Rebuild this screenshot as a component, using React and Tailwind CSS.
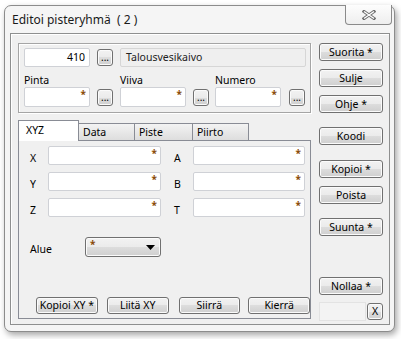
import React from "react";

const SKIN =
  "rounded-[3px] border border-[#707070] bg-[linear-gradient(#f2f2f2,#ebebeb_50%,#dddddd_50%,#cfcfcf)] shadow-[inset_0_0_0_1px_#fbfbfb] text-black text-[10.5px] leading-none";
const BTN = `flex items-center justify-center ${SKIN}`;

function Btn({ children, className = "" }) {
  return <div className={`${BTN} ${className}`}>{children}</div>;
}

function Field({ className = "", star = true, value = "" }) {
  return (
    <div
      className={`relative flex items-center justify-end rounded-[2px] border border-[#cfd1d6] bg-white pr-[4px] text-[10.5px] leading-none text-black ${className}`}
    >
      {value}
      {star && (
        <span className="absolute right-[3px] top-[1px] text-[10px] font-bold text-[#8a4a05]">*</span>
      )}
    </div>
  );
}

function Dots({ className = "" }) {
  return (
    <div className={`flex justify-center items-end ${SKIN} h-[17px] w-[16px] pb-[3px] text-[10px] ${className}`}>...</div>
  );
}

function Tab({ children, active, className = "" }) {
  if (active)
    return (
      <div
        className={`relative z-10 flex h-[21px] items-center border border-b-0 border-[#898c95] bg-white pl-[7px] text-[10.5px] ${className}`}
      >
        {children}
      </div>
    );
  return (
    <div
      className={`mt-[3px] flex h-[18px] items-center border border-l-0 border-b-0 border-[#898c95] bg-[linear-gradient(#f3f3f3,#dcdcdc)] pl-[4px] text-[10.5px] ${className}`}
    >
      {children}
    </div>
  );
}

export default function App() {
  return (
    <div className="min-h-screen bg-white pl-[4px] pt-[5px] font-['Noto_Sans',sans-serif] text-black">
      <div className="flex h-[327px] w-[391px] flex-col rounded-[7px] border border-[#8c8c8c] bg-[#f5f5f5] shadow-[2px_3px_6px_rgba(0,0,0,0.35)]">
        {/* title bar */}
        <div className="flex h-[27px] items-start justify-between">
          <div className="pl-[7px] pt-[8px] text-[12px] leading-none text-[#1a1a1a]">
            Editoi pisteryhmä&nbsp;&nbsp;( 2 )
          </div>
          <div className="mr-[2px] -mt-[1px] flex h-[20px] w-[47px] items-center justify-center rounded-b-[4px] border border-t-0 border-[#8a8a8a] bg-[linear-gradient(#fdfdfd,#eeeeee)]">
            <svg width="14" height="10" viewBox="0 0 14 10">
              <path d="M2 1.5 L12 8.5 M12 1.5 L2 8.5" stroke="#6e6e6e" strokeWidth="3.2" strokeLinecap="square" fill="none" />
              <path d="M2 1.5 L12 8.5 M12 1.5 L2 8.5" stroke="#ffffff" strokeWidth="1.4" strokeLinecap="butt" fill="none" />
            </svg>
          </div>
        </div>

        {/* client area */}
        <div className="mb-[6px] ml-[5px] mr-[4px] flex flex-1 border border-[#8e8f8f] bg-[#f0f0f0] pl-[7px] pt-[9px] shadow-[inset_1px_1px_0_#ffffff]">
          {/* left column */}
          <div className="flex w-[293px] flex-col">
            {/* group box */}
            <div className="h-[70px] border border-[#a5a5a5] pl-[5px] pt-[4px] shadow-[inset_1px_1px_0_#ffffff,1px_1px_0_#ffffff]">
              <div className="flex items-center">
                <Field className="h-[19px] w-[66px]" star={false} value="410" />
                <Dots className="ml-[7px]" />
                <div className="ml-[7px] flex h-[19px] w-[186px] items-center rounded-[2px] border border-[#d6d6d6] bg-[#efefef] pl-[5px] text-[10.5px] leading-none text-[#222]">
                  Talousvesikaivo
                </div>
              </div>
              <div className="mt-[7px] flex">
                <div className="flex w-[96px] flex-col">
                  <div className="h-[13px] text-[10.5px] leading-[13px]">Pinta</div>
                  <div className="flex items-center">
                    <Field className="h-[20px] w-[66px]" />
                    <Dots className="ml-[7px]" />
                  </div>
                </div>
                <div className="flex w-[95px] flex-col">
                  <div className="h-[13px] text-[10.5px] leading-[13px]">Viiva</div>
                  <div className="flex items-center">
                    <Field className="h-[20px] w-[66px]" />
                    <Dots className="ml-[7px]" />
                  </div>
                </div>
                <div className="flex flex-col">
                  <div className="h-[13px] text-[10.5px] leading-[13px]">Numero</div>
                  <div className="flex items-center">
                    <Field className="h-[20px] w-[66px]" />
                    <Dots className="ml-[8px]" />
                  </div>
                </div>
              </div>
            </div>

            {/* tabs */}
            <div className="mt-[7px] flex">
              <Tab active className="w-[61px]">XYZ</Tab>
              <Tab className="w-[56px]">Data</Tab>
              <Tab className="w-[58px]">Piste</Tab>
              <Tab className="w-[56px]">Piirto</Tab>
            </div>
            <div className="-mt-[1px] flex h-[179px] flex-col border border-[#898c95] bg-[#f0f0f0] pl-[11px] pt-[5px]">
              <div className="flex flex-col gap-[7px]">
                {[
                  ["X", "A"],
                  ["Y", "B"],
                  ["Z", "T"],
                ].map(([l, r]) => (
                  <div key={l} className="flex items-center">
                    <div className="w-[18px] pt-[5px] text-[10.5px] leading-none">{l}</div>
                    <Field className="h-[19px] w-[113px]" />
                    <div className="ml-[13px] w-[19px] pt-[5px] text-[10.5px] leading-none">{r}</div>
                    <Field className="h-[19px] w-[112px]" />
                  </div>
                ))}
              </div>
              <div className="mt-[20px] flex items-center">
                <div className="w-[55px] pt-[5px] text-[10.5px] leading-none">Alue</div>
                <div className={`flex items-center justify-between ${SKIN} h-[20px] w-[76px] pl-[4px] pr-[4px]`}>
                  <span className="-mt-[6px] text-[10px] font-bold text-[#8a4a05]">*</span>
                  <svg width="9" height="5" viewBox="0 0 9 5" className="mr-[1px] mt-[1px]">
                    <path d="M0 0 H9 L4.5 5 Z" fill="#000" />
                  </svg>
                </div>
              </div>
              <div className="mt-auto mb-[4px] ml-[6px] flex">
                <Btn className="h-[17px] w-[63px]">Kopioi XY *</Btn>
                <Btn className="ml-[9px] h-[17px] w-[63px]">Liitä XY</Btn>
                <Btn className="ml-[10px] h-[17px] w-[63px]">Siirrä</Btn>
                <Btn className="ml-[8px] h-[17px] w-[63px]">Kierrä</Btn>
              </div>
            </div>
          </div>

          {/* right column */}
          <div className="ml-[8px] flex w-[64px] flex-col">
            <Btn className="h-[18px]">Suorita *</Btn>
            <Btn className="mt-[8px] h-[18px]">Sulje</Btn>
            <Btn className="mt-[8px] h-[18px]">Ohje *</Btn>
            <Btn className="mt-[14px] h-[18px]">Koodi</Btn>
            <Btn className="mt-[15px] h-[18px]">Kopioi *</Btn>
            <Btn className="mt-[8px] h-[18px]">Poista</Btn>
            <Btn className="mt-[14px] h-[18px]">Suunta *</Btn>
            <Btn className="mt-[41px] h-[18px]">Nollaa *</Btn>
            <div className="mt-[7px] flex items-start">
              <div className="h-[19px] w-[48px] border border-[#e3e3e3] bg-[#f3f3f3]" />
              <Btn className="ml-[1px] mt-[1px] h-[17px] w-[16px]">X</Btn>
            </div>
          </div>
        </div>
      </div>
    </div>
  );
}
